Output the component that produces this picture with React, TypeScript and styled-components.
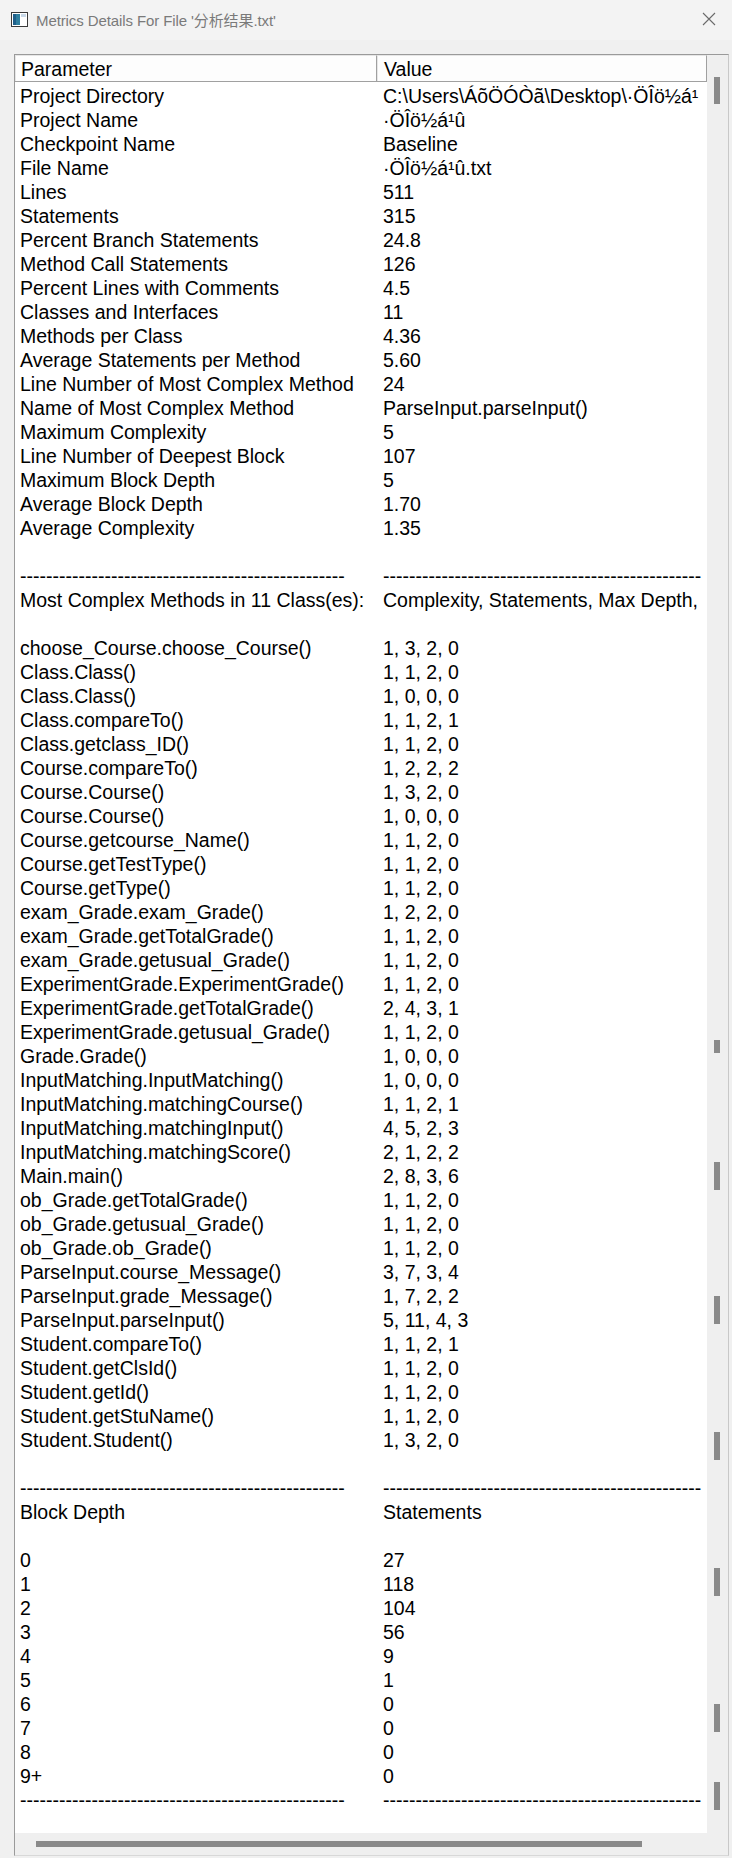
import React from 'react';
import styled, {createGlobalStyle} from "styled-components";

const GlobalStyle = createGlobalStyle`
    html, body {
        margin: 0;
        padding: 0;
        background: #f0f0f0;
    }
`

const DASH = "-".repeat(50);
const DASH_VALUE = "-".repeat(49);

const summary: [string, string][] = [
    ["Project Directory", "C:\\Users\\ÁõÖÓÒã\\Desktop\\·ÖÎö½á¹"],
    ["Project Name", "·ÖÎö½á¹û"],
    ["Checkpoint Name", "Baseline"],
    ["File Name", "·ÖÎö½á¹û.txt"],
    ["Lines", "511"],
    ["Statements", "315"],
    ["Percent Branch Statements", "24.8"],
    ["Method Call Statements", "126"],
    ["Percent Lines with Comments", "4.5"],
    ["Classes and Interfaces", "11"],
    ["Methods per Class", "4.36"],
    ["Average Statements per Method", "5.60"],
    ["Line Number of Most Complex Method", "24"],
    ["Name of Most Complex Method", "ParseInput.parseInput()"],
    ["Maximum Complexity", "5"],
    ["Line Number of Deepest Block", "107"],
    ["Maximum Block Depth", "5"],
    ["Average Block Depth", "1.70"],
    ["Average Complexity", "1.35"],
];

const methods: [string, string][] = [
    ["choose_Course.choose_Course()", "1, 3, 2, 0"],
    ["Class.Class()", "1, 1, 2, 0"],
    ["Class.Class()", "1, 0, 0, 0"],
    ["Class.compareTo()", "1, 1, 2, 1"],
    ["Class.getclass_ID()", "1, 1, 2, 0"],
    ["Course.compareTo()", "1, 2, 2, 2"],
    ["Course.Course()", "1, 3, 2, 0"],
    ["Course.Course()", "1, 0, 0, 0"],
    ["Course.getcourse_Name()", "1, 1, 2, 0"],
    ["Course.getTestType()", "1, 1, 2, 0"],
    ["Course.getType()", "1, 1, 2, 0"],
    ["exam_Grade.exam_Grade()", "1, 2, 2, 0"],
    ["exam_Grade.getTotalGrade()", "1, 1, 2, 0"],
    ["exam_Grade.getusual_Grade()", "1, 1, 2, 0"],
    ["ExperimentGrade.ExperimentGrade()", "1, 1, 2, 0"],
    ["ExperimentGrade.getTotalGrade()", "2, 4, 3, 1"],
    ["ExperimentGrade.getusual_Grade()", "1, 1, 2, 0"],
    ["Grade.Grade()", "1, 0, 0, 0"],
    ["InputMatching.InputMatching()", "1, 0, 0, 0"],
    ["InputMatching.matchingCourse()", "1, 1, 2, 1"],
    ["InputMatching.matchingInput()", "4, 5, 2, 3"],
    ["InputMatching.matchingScore()", "2, 1, 2, 2"],
    ["Main.main()", "2, 8, 3, 6"],
    ["ob_Grade.getTotalGrade()", "1, 1, 2, 0"],
    ["ob_Grade.getusual_Grade()", "1, 1, 2, 0"],
    ["ob_Grade.ob_Grade()", "1, 1, 2, 0"],
    ["ParseInput.course_Message()", "3, 7, 3, 4"],
    ["ParseInput.grade_Message()", "1, 7, 2, 2"],
    ["ParseInput.parseInput()", "5, 11, 4, 3"],
    ["Student.compareTo()", "1, 1, 2, 1"],
    ["Student.getClsId()", "1, 1, 2, 0"],
    ["Student.getId()", "1, 1, 2, 0"],
    ["Student.getStuName()", "1, 1, 2, 0"],
    ["Student.Student()", "1, 3, 2, 0"],
];

const depths: [string, string][] = [
    ["0", "27"], ["1", "118"], ["2", "104"], ["3", "56"], ["4", "9"],
    ["5", "1"], ["6", "0"], ["7", "0"], ["8", "0"], ["9+", "0"],
];

const BLANK: [string, string] = ["", ""];
const DASHES: [string, string] = [DASH, DASH_VALUE];

const rows: [string, string][] = [
    ...summary,
    BLANK,
    DASHES,
    ["Most Complex Methods in 11 Class(es):", "Complexity, Statements, Max Depth,"],
    BLANK,
    ...methods,
    BLANK,
    DASHES,
    ["Block Depth", "Statements"],
    BLANK,
    ...depths,
    DASHES,
];

// leftover thumb images the scrollbar left behind (top offset, height)
const thumbs: [number, number][] = [
    [22, 27], [985, 13], [1107, 28], [1241, 28], [1377, 28], [1513, 28], [1649, 28], [1727, 28],
];

const WindowIcon = () => (
    <svg width="17" height="15" viewBox="0 0 17 15">
        <rect x="0.5" y="0.5" width="16" height="14" fill="#fff" stroke="#3a3a3a"/>
        <rect x="2" y="2" width="7" height="11" fill="#2f7f9f"/>
        <rect x="2" y="2" width="3" height="11" fill="#1f5f8a"/>
        <rect x="10" y="2" width="5" height="3" fill="#c8d8e8"/>
    </svg>
);

const CloseIcon = () => (
    <svg width="14" height="14" viewBox="0 0 14 14">
        <path d="M1 1L13 13M13 1L1 13" stroke="#6a6a6a" strokeWidth="1.1" fill="none"/>
    </svg>
);

export default function App() {
    return (
        <Window>
            <GlobalStyle/>
            <TitleBar>
                <WindowIcon/>
                <Title>Metrics Details For File '分析结果.txt'</Title>
                <CloseButton><CloseIcon/></CloseButton>
            </TitleBar>
            <Body>
                <Panel>
                    <Viewport>
                        <HeaderRow>
                            <HeaderCell $width={362}>Parameter</HeaderCell>
                            <HeaderCell>Value</HeaderCell>
                        </HeaderRow>
                        <List>
                            {rows.map(([name, value], i) => (
                                <Row key={i}>
                                    <NameCell>{name}</NameCell>
                                    <ValueCell>{value}</ValueCell>
                                </Row>
                            ))}
                        </List>
                    </Viewport>
                    <VTrack>
                        {thumbs.map(([top, h], i) => (
                            <VThumb key={i} style={{top, height: h}}/>
                        ))}
                    </VTrack>
                    <HTrack>
                        <HThumb/>
                    </HTrack>
                    <Corner/>
                </Panel>
            </Body>
        </Window>
    );
}

const Window = styled.div`
    width: 732px;
    height: 1858px;
    display: flex;
    flex-direction: column;
    background: #f0f0f0;
    overflow: hidden;
`
const TitleBar = styled.div`
    height: 40px;
    flex: none;
    display: flex;
    align-items: center;
    padding: 0 0 2px 11px;
    box-sizing: border-box;
    gap: 8px;
    background: #f3f3f3;
`
const Title = styled.div`
    font-family: "Liberation Sans", "Noto Sans CJK SC", sans-serif;
    font-size: 15px;
    color: #7a7a7a;
    flex: 1;
    letter-spacing: -0.1px;
`
const CloseButton = styled.div`
    width: 46px;
    display: flex;
    justify-content: center;
    align-items: center;
`
const Body = styled.div`
    flex: 1;
    display: flex;
    padding: 14px 3px 2px 14px;
    min-height: 0;
`
const Panel = styled.div`
    flex: 1;
    display: grid;
    grid-template-columns: 1fr 21px;
    grid-template-rows: 1fr 22px;
    border: 1px solid #9a9a9a;
    border-right-color: #c8c8c8;
    border-bottom-color: #d8d8d8;
    background: #f0f0f0;
    min-height: 0;
`
const Viewport = styled.div`
    overflow: hidden;
    background: #fff;
    font-family: "Liberation Sans", Arial, sans-serif;
    font-size: 19.5px;
    color: #000;
    min-width: 0;
`
const HeaderRow = styled.div`
    display: flex;
    height: 27px;
    border-bottom: 1px solid #a0a0a0;
    box-sizing: border-box;
    background: #fdfdfd;
`
const HeaderCell = styled.div<{ $width?: number }>`
    ${p => p.$width ? `width: ${p.$width}px; flex: none;` : `flex: 1;`}
    padding-left: ${p => p.$width ? 5 : 6}px;
    box-sizing: border-box;
    line-height: 26px;
    border-top: 1px solid #e6e6e6;
    border-left: 1px solid #e6e6e6;
    border-right: 1px solid #a0a0a0;
    white-space: nowrap;
`
const List = styled.div`
    padding-top: 2px;
`
const Row = styled.div`
    display: flex;
    height: 24px;
    line-height: 24px;
    white-space: nowrap;
`
const NameCell = styled.div`
    width: 362px;
    flex: none;
    padding-left: 5px;
    box-sizing: border-box;
    overflow: hidden;
`
const ValueCell = styled.div`
    padding-left: 6px;
`
const VTrack = styled.div`
    position: relative;
    background: #efefef;
`
const VThumb = styled.div`
    position: absolute;
    left: 7px;
    width: 6px;
    background: #8a8a8a;
`
const HTrack = styled.div`
    position: relative;
    background: #efefef;
    display: flex;
    align-items: center;
    padding-left: 21px;
`
const HThumb = styled.div`
    width: 606px;
    height: 6px;
    background: #8a8a8a;
`
const Corner = styled.div`
    background: #efefef;
`
